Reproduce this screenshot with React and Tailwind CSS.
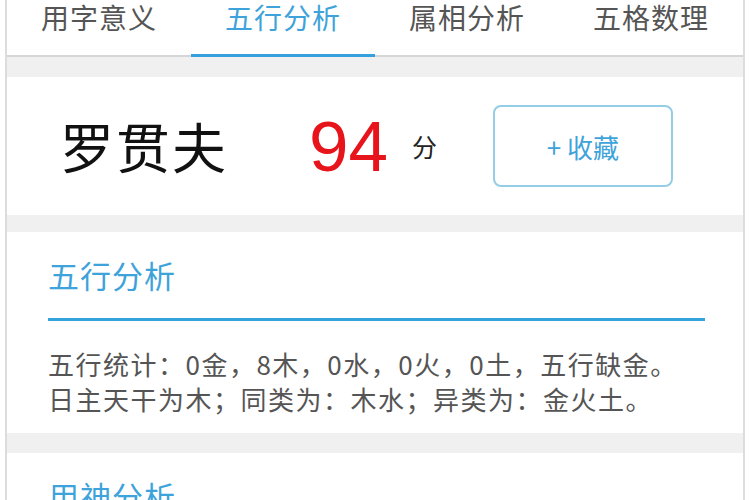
import React from 'react';

const tabs = ['用字意义', '五行分析', '属相分析', '五格数理'];

const cjk = "font-['Noto_Sans_CJK_SC',sans-serif]";

const App = () => {
  return (
    <div className={`w-[750px] h-[500px] overflow-hidden bg-white px-[5px] ${cjk}`}>
      <div className="h-full border-x-2 border-[#dcdcdc] bg-[#f0f0f0]">
        {/* Tabs */}
        <div className="grid grid-cols-4 h-[57px] bg-white border-b-2 border-[#d6d6d6] pt-[2px]">
          {tabs.map((tab, i) => (
            <div key={tab} className="relative flex justify-center">
              <span
                className={`text-[28px] leading-[30px] tracking-[1px] ${
                  i === 1 ? 'text-[#3ea3da]' : 'text-[#555555]'
                }`}
              >
                {tab}
              </span>
              {i === 1 && (
                <div className="absolute left-0 right-0 bottom-[-2px] h-[3px] bg-[#35a0db]"></div>
              )}
            </div>
          ))}
        </div>

        {/* Name + score */}
        <div className="mt-[20px] h-[138px] bg-white flex items-center pl-[53px]">
          <span className="text-[54px] leading-none tracking-[2px] text-[#111111]">罗贯夫</span>
          <span className="ml-[81px] font-['Liberation_Sans',sans-serif] text-[71px] leading-none text-[#e8141b]">
            94
          </span>
          <span className="ml-[24px] text-[25px] leading-none text-[#222222]">分</span>
          <button className="ml-[56px] w-[180px] h-[82px] rounded-[8px] border-2 border-[#95cde6] flex items-center justify-center text-[26px] text-[#3ea3da]">
            + 收藏
          </button>
        </div>

        {/* Wuxing */}
        <div className="mt-[17px] h-[201px] bg-white pt-[23px]">
          <h2 className="pl-[41px] text-[31px] leading-[40px] tracking-[1px] text-[#3ea3da]">五行分析</h2>
          <div className="mt-[23px] ml-[41px] mr-[38px] h-[3px] bg-[#35a3dc]"></div>
          <div className="mt-[25px] pl-[41px] text-[26px] leading-[35px] tracking-[1.5px] text-[#555555]">
            <p>五行统计：0金，8木，0水，0火，0土，五行缺金。</p>
            <p>日主天干为木；同类为：木水；异类为：金火土。</p>
          </div>
        </div>

        {/* Yongshen */}
        <div className="mt-[20px] h-[100px] bg-white pt-[23px]">
          <h2 className="pl-[41px] text-[31px] leading-[40px] tracking-[1px] text-[#3ea3da]">用神分析</h2>
        </div>
      </div>
    </div>
  );
};

export default App;
